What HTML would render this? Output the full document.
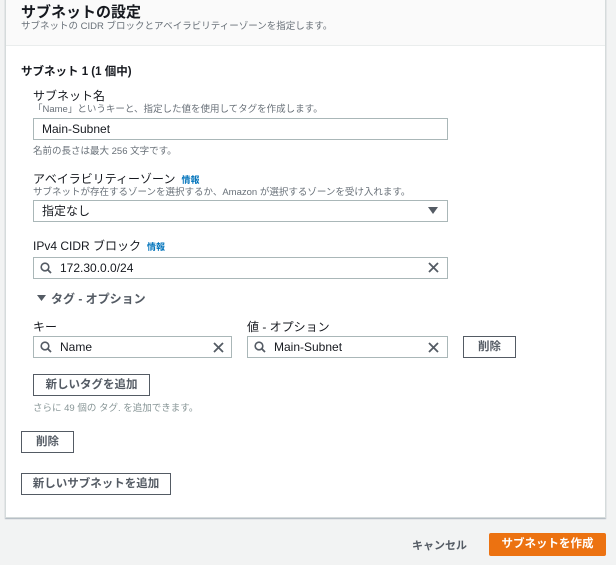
<!DOCTYPE html>
<html><head><meta charset="utf-8"><style>
*{box-sizing:border-box;margin:0;padding:0}
body{width:616px;height:565px;background:#f2f3f3;font-family:"Liberation Sans","Noto Sans CJK JP",sans-serif;color:#16191f;position:relative;overflow:hidden}
.a{position:absolute;white-space:nowrap}
.card{position:absolute;left:5px;top:-2px;width:601px;height:520px;background:#fff;border:1px solid #d5dbdb;border-top:none;box-shadow:0 1px 1px rgba(0,31,63,.3)}
.hdr{position:absolute;left:6px;top:0;width:599px;height:46px;background:#fafafa;border-bottom:1px solid #eaeded}
.inp{position:absolute;height:22px;border:1px solid #aab7b8;background:#fff;font-size:12px;line-height:21px}
.btn{position:absolute;height:22px;border:1px solid #545b64;background:#fff;font-size:11.5px;font-weight:bold;color:#545b64;text-align:center;line-height:20px}
.lbl{font-size:12px;color:#16191f}
.desc{font-size:9.5px;color:#687078}
.info{font-size:9px;font-weight:bold;color:#0073bb;margin-left:6px}
svg{position:absolute}
</style></head><body>
<div class="card"></div>
<div class="hdr"></div>
<div class="a" style="left:21px;top:1px;font-size:15px;font-weight:bold">サブネットの設定</div>
<div class="a desc" style="left:21px;top:18px">サブネットの CIDR ブロックとアベイラビリティーゾーンを指定します。</div>
<div class="a" style="left:21px;top:63px;font-size:11.5px;font-weight:bold">サブネット 1 (1 個中)</div>
<div class="a lbl" style="left:33px;top:87px">サブネット名</div>
<div class="a desc" style="left:33px;top:101px">「Name」というキーと、指定した値を使用してタグを作成します。</div>
<div class="inp" style="left:33px;top:118px;width:415px;padding-left:8px">Main-Subnet</div>
<div class="a desc" style="left:33px;top:143px">名前の長さは最大 256 文字です。</div>
<div class="a lbl" style="left:33px;top:170px">アベイラビリティーゾーン<span class="info">情報</span></div>
<div class="a desc" style="left:33px;top:184px">サブネットが存在するゾーンを選択するか、Amazon が選択するゾーンを受け入れます。</div>
<div class="inp" style="left:33px;top:200px;width:415px;padding-left:8px">指定なし</div>
<svg style="left:428px;top:207px" width="10" height="8"><path d="M0 0H10L5 7Z" fill="#545b64"/></svg>
<div class="a lbl" style="left:33px;top:237px">IPv4 CIDR ブロック<span class="info">情報</span></div>
<div class="inp" style="left:33px;top:257px;width:415px;padding-left:26px">172.30.0.0/24</div>
<svg style="left:40px;top:262px" width="12" height="12"><circle cx="5" cy="5" r="3.8" fill="none" stroke="#545b64" stroke-width="1.6"/><path d="M8 8L11 11" stroke="#545b64" stroke-width="1.8"/></svg>
<svg style="left:428px;top:262px" width="11" height="11"><path d="M1 1L10 10M10 1L1 10" stroke="#545b64" stroke-width="1.8"/></svg>
<svg style="left:37px;top:295px" width="9" height="7"><path d="M0 0H9L4.5 6Z" fill="#545b64"/></svg>
<div class="a" style="left:51px;top:290px;font-size:12px;font-weight:bold;color:#545b64">タグ - オプション</div>
<div class="a lbl" style="left:33px;top:318px">キー</div>
<div class="a lbl" style="left:247px;top:318px">値 - オプション</div>
<div class="inp" style="left:33px;top:336px;width:199px;padding-left:26px">Name</div>
<svg style="left:40px;top:341px" width="12" height="12"><circle cx="5" cy="5" r="3.8" fill="none" stroke="#545b64" stroke-width="1.6"/><path d="M8 8L11 11" stroke="#545b64" stroke-width="1.8"/></svg>
<svg style="left:213px;top:342px" width="11" height="11"><path d="M1 1L10 10M10 1L1 10" stroke="#545b64" stroke-width="1.8"/></svg>
<div class="inp" style="left:247px;top:336px;width:201px;padding-left:26px">Main-Subnet</div>
<svg style="left:254px;top:341px" width="12" height="12"><circle cx="5" cy="5" r="3.8" fill="none" stroke="#545b64" stroke-width="1.6"/><path d="M8 8L11 11" stroke="#545b64" stroke-width="1.8"/></svg>
<svg style="left:428px;top:342px" width="11" height="11"><path d="M1 1L10 10M10 1L1 10" stroke="#545b64" stroke-width="1.8"/></svg>
<div class="btn" style="left:463px;top:336px;width:53px">削除</div>
<div class="btn" style="left:33px;top:374px;width:117px">新しいタグを追加</div>
<div class="a desc" style="left:33px;top:400px;color:#879596">さらに 49 個の タグ. を追加できます。</div>
<div class="btn" style="left:21px;top:431px;width:53px">削除</div>
<div class="btn" style="left:21px;top:473px;width:150px">新しいサブネットを追加</div>
<div class="a" style="left:412px;top:537px;font-size:11px;font-weight:bold;color:#545b64">キャンセル</div>
<div class="a" style="left:489px;top:533px;width:117px;height:23px;background:#ec7211;border-radius:2px;color:#fff;font-size:11.5px;font-weight:bold;text-align:center;line-height:23px">サブネットを作成</div>
</body></html>
